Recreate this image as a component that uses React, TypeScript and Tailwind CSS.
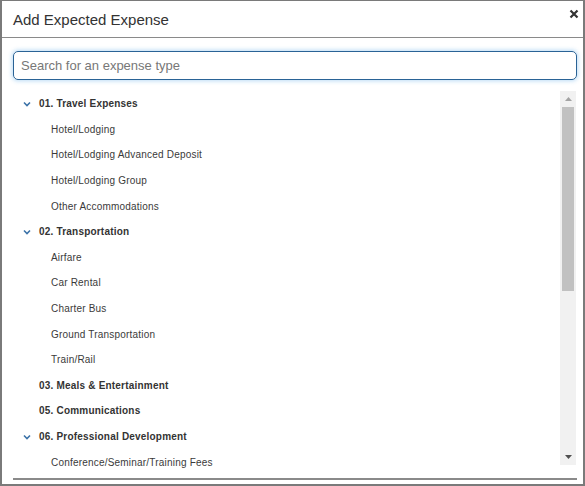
import React from "react";

type Row = { label: string; kind: "cat" | "item"; open?: boolean };

const rows: Row[] = [
  { label: "01. Travel Expenses", kind: "cat", open: true },
  { label: "Hotel/Lodging", kind: "item" },
  { label: "Hotel/Lodging Advanced Deposit", kind: "item" },
  { label: "Hotel/Lodging Group", kind: "item" },
  { label: "Other Accommodations", kind: "item" },
  { label: "02. Transportation", kind: "cat", open: true },
  { label: "Airfare", kind: "item" },
  { label: "Car Rental", kind: "item" },
  { label: "Charter Bus", kind: "item" },
  { label: "Ground Transportation", kind: "item" },
  { label: "Train/Rail", kind: "item" },
  { label: "03. Meals & Entertainment", kind: "cat" },
  { label: "05. Communications", kind: "cat" },
  { label: "06. Professional Development", kind: "cat", open: true },
  { label: "Conference/Seminar/Training Fees", kind: "item" },
];

function Chevron() {
  return (
    <svg width="8" height="6" viewBox="0 0 8 6" className="shrink-0">
      <path d="M1 1.5 L4 4.5 L7 1.5" fill="none" stroke="#3b72a8" strokeWidth="1.6" />
    </svg>
  );
}

export default function App() {
  return (
    <div
      className="w-[585px] h-[486px] bg-white border-t border-b-2 border-x-2 border-[#7a7a7a] flex flex-col overflow-hidden text-[#333]"
      style={{ fontFamily: '"Liberation Sans", Arial, sans-serif' }}
    >
      <div className="h-[37px] shrink-0 border-b border-[#8a8a8a] flex items-center justify-between pl-[11px] pr-[4px]">
        <span className="text-[15px] text-[#333] leading-none mt-[1px]">Add Expected Expense</span>
        <svg width="10" height="10" viewBox="0 0 10 10" className="self-start mt-[8px]">
          <path d="M1.5 1.5 L8.5 8.5 M8.5 1.5 L1.5 8.5" stroke="#333" strokeWidth="2.2" />
        </svg>
      </div>
      <div className="flex-1 flex flex-col pl-[11px] pr-[6px] pt-[13px] min-h-0">
        <div className="h-[29px] shrink-0 rounded-[5px] border border-[#2a6396] shadow-[0_0_4px_1px_rgba(102,175,233,0.45)] flex items-center px-[7px]">
          <span className="text-[13px] text-[#777]">Search for an expense type</span>
        </div>
        <div className="flex mt-[11px] h-[374px] shrink-0">
          <div className="flex-1 flex flex-col">
            {rows.map((r, i) =>
              r.kind === "cat" ? (
                <div key={i} className="h-[25.6px] shrink-0 flex items-center">
                  <div className="w-[26px] flex justify-center pl-[1px]">{r.open ? <Chevron /> : null}</div>
                  <span className="text-[10px] font-bold tracking-[0.2px] text-[#333]">{r.label}</span>
                </div>
              ) : (
                <div key={i} className="h-[25.6px] shrink-0 flex items-center pl-[38px]">
                  <span className="text-[10px] tracking-[0.2px] text-[#3a3a3a]">{r.label}</span>
                </div>
              )
            )}
          </div>
          <div className="w-[16px] mr-[1px] bg-[#f1f1f1] flex flex-col items-center">
            <div className="h-[16px] w-full flex items-center justify-center">
              <svg width="7" height="4" viewBox="0 0 7 4"><path d="M0 4 L3.5 0 L7 4 Z" fill="#a3a3a3" /></svg>
            </div>
            <div className="w-[12px] h-[184px] bg-[#c1c1c1]" />
            <div className="flex-1" />
            <div className="h-[16px] w-full flex items-center justify-center">
              <svg width="7" height="4" viewBox="0 0 7 4"><path d="M0 0 L3.5 4 L7 0 Z" fill="#505050" /></svg>
            </div>
          </div>
        </div>
        <div className="mt-[13px] h-[2px] bg-[#8a8a8a]" />
      </div>
    </div>
  );
}
